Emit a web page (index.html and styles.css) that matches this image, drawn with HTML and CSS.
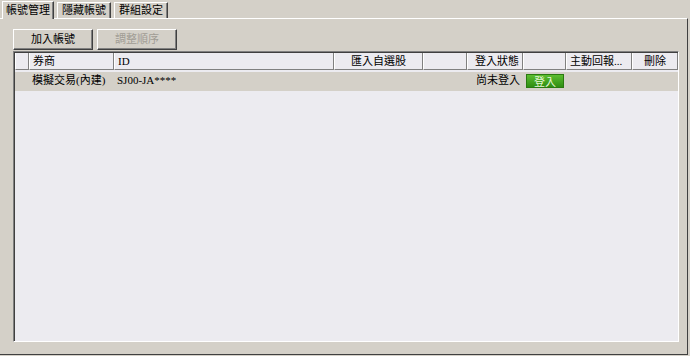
FILE: index.html
```html
<!DOCTYPE html>
<html>
	<head>
		<meta charset="utf-8">
		<title>帳號管理</title>
		<link rel="stylesheet" href="styles.css">
	</head>
	<body>
		<div class="tabs">
			<div class="tab active">帳號管理</div>
			<div class="tab">隱藏帳號</div>
			<div class="tab">群組設定</div>
		</div>
		<div class="panel">
			<div class="toolbar">
				<div class="btn">加入帳號</div>
				<div class="btn disabled">調整順序</div>
			</div>
			<div class="grid">
				<div class="row head">
					<div class="cell c0"></div>
					<div class="cell c1">券商</div>
					<div class="cell c2">ID</div>
					<div class="cell c3 center">匯入自選股</div>
					<div class="cell c4"></div>
					<div class="cell c5 right">登入狀態</div>
					<div class="cell c6"></div>
					<div class="cell c7">主動回報...</div>
					<div class="cell c8 center">刪除</div>
				</div>
				<div class="row data">
					<div class="cell c0"></div>
					<div class="cell c1">模擬交易(內建)</div>
					<div class="cell c2">SJ00-JA****</div>
					<div class="cell c3"></div>
					<div class="cell c4"></div>
					<div class="cell c5 right">尚未登入</div>
					<div class="cell c6"><span class="login">登入</span></div>
					<div class="cell c7"></div>
					<div class="cell c8"></div>
				</div>
			</div>
		</div>
	</body>
</html>
```

FILE: styles.css
```css
body{
	margin:0;
	width:690px;
	height:356px;
	background-color:#d4d0c8;
	font-family:"Liberation Serif", "Noto Sans CJK TC", serif;
	font-size:11px;
	color:#000;
	overflow:hidden;
}
div.tabs{
	display:flex;
	align-items:flex-end;
	height:18px;
	padding-left:2px;
}
div.tab{
	height:15px;
	line-height:15px;
	padding:0 4px;
	margin-right:3px;
	border-left:1px solid #fff;
	border-top:1px solid #fff;
	border-right:1px solid #404040;
	box-shadow:inset -1px 0 0 #808080;
}
div.tab.active{
	height:17px;
	line-height:16px;
	margin-bottom:-1px;
	padding:0 3px;
	background-color:#d4d0c8;
	position:relative;
}
div.panel{
	box-sizing:border-box;
	border-top:1px solid #fff;
	border-right:1px solid #404040;
	border-bottom:1px solid #404040;
	margin-right:2px;
	height:337px;
	padding:10px 10px 0 13px;
}
div.toolbar{
	display:flex;
	gap:4px;
	height:22px;
}
div.btn{
	width:78px;
	height:19px;
	line-height:19px;
	text-align:center;
	border-left:1px solid #fff;
	border-top:1px solid #fff;
	border-right:1px solid #404040;
	border-bottom:1px solid #404040;
	box-shadow:inset -1px -1px 0 #808080;
}
div.btn.disabled{
	color:#a09c94;
}
div.grid{
	width:663px;
	height:288px;
	border-left:1px solid #808080;
	border-top:1px solid #808080;
	border-right:1px solid #fff;
	border-bottom:1px solid #fff;
	box-shadow:inset 1px 1px 0 #404040;
	background-color:#ecebf0;
	padding:1px 0 0 1px;
}
div.row{
	display:flex;
	height:19px;
}
div.row.head .cell{
	border-left:1px solid #fff;
	border-right:1px solid #808080;
	border-bottom:1px solid #808080;
	height:17px;
	line-height:17px;
}
div.row.data{
	background-color:#d4d0c8;
	height:19px;
}
div.cell{
	box-sizing:border-box;
	padding:0 3px;
	white-space:nowrap;
	overflow:hidden;
	line-height:17px;
}
div.center{
	text-align:center;
}
div.right{
	text-align:right;
}
div.c0{ width:14px; }
div.c1{ width:85px; }
div.c2{ width:220px; }
div.c3{ width:89px; }
div.c4{ width:44px; }
div.c5{ width:56px; }
div.c6{ width:43px; }
div.c7{ width:66px; }
div.c8{ width:46px; }
span.login{
	display:inline-block;
	width:38px;
	height:14px;
	line-height:14px;
	margin-top:2px;
	text-align:center;
	color:#e6f7d8;
	background:linear-gradient(#5cbd30, #2f8e12);
	border:1px solid #2a7a10;
	box-sizing:border-box;
}
```
